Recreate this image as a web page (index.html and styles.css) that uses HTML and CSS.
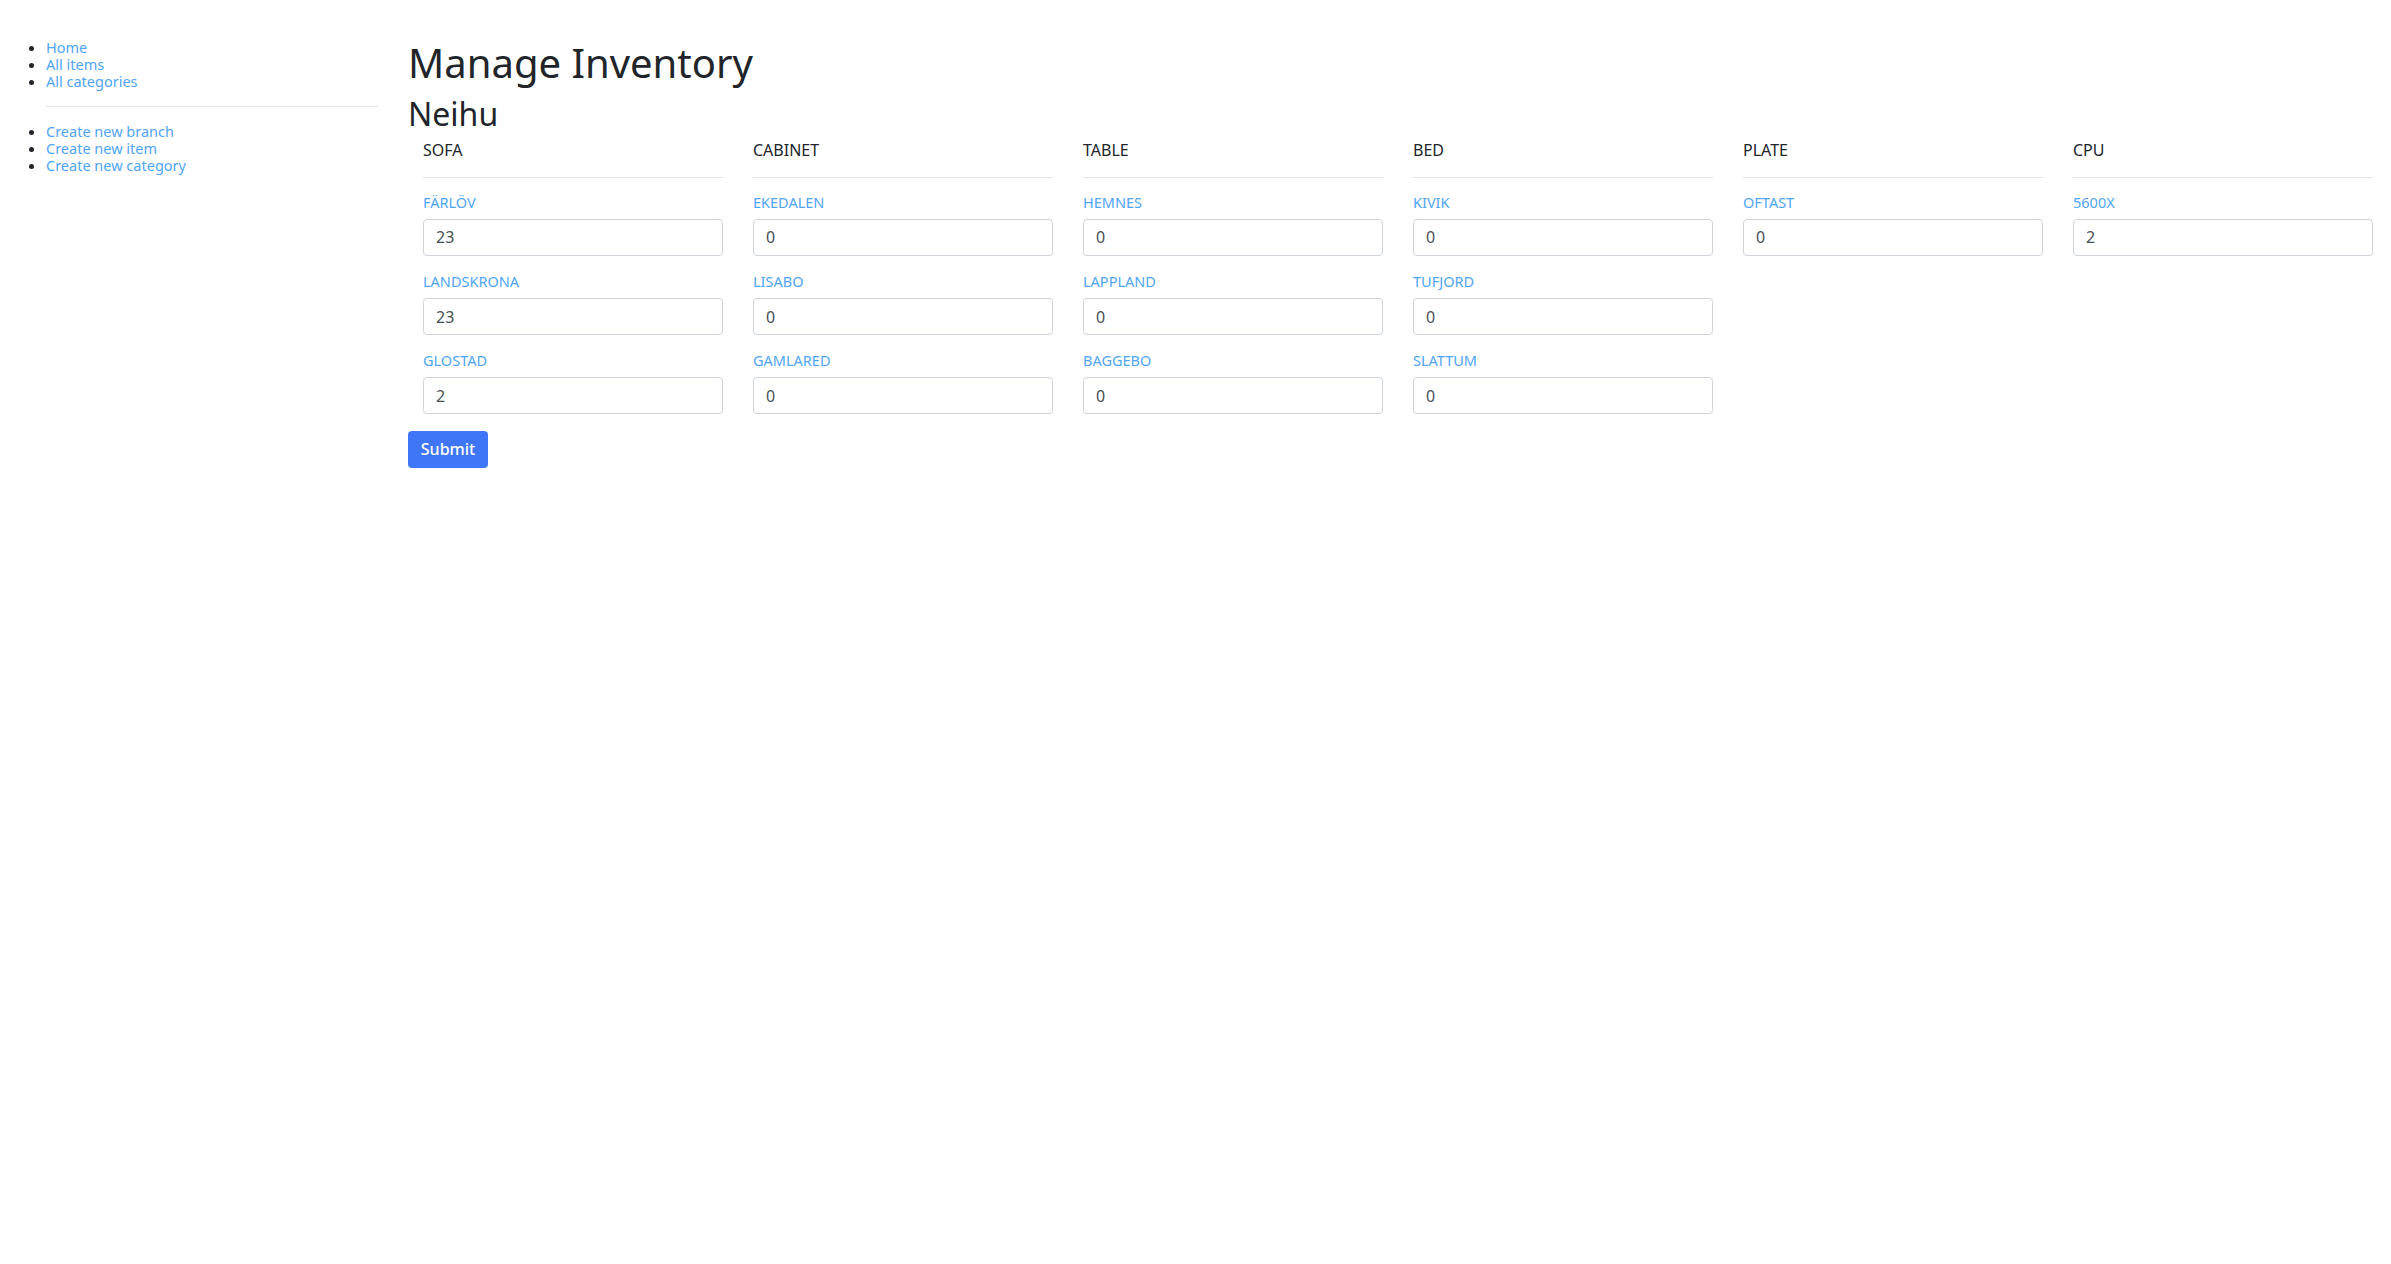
FILE: index.html
```html
<!DOCTYPE html>
<html lang="en">
<head>
<meta charset="utf-8">
<title>Manage Inventory</title>
<link rel="stylesheet" href="styles.css">
</head>
<body>
<div class="layout">
  <nav class="sidebar">
    <ul class="nav-list nav-list-first">
      <li><a href="#">Home</a></li>
      <li><a href="#">All items</a></li>
      <li><a href="#">All categories</a></li>
    </ul>
    <hr class="nav-rule">
    <ul class="nav-list">
      <li><a href="#">Create new branch</a></li>
      <li><a href="#">Create new item</a></li>
      <li><a href="#">Create new category</a></li>
    </ul>
  </nav>
  <main class="main">
    <h1 class="title">Manage Inventory</h1>
    <h2 class="subtitle">Neihu</h2>
    <form class="inventory-form">
      <div class="grid">
        <div class="col">
          <div class="col-head">SOFA</div>
          <hr class="col-rule">
          <div class="group"><label class="lbl"><a href="#">FÄRLÖV</a></label><input class="field" type="text" value="23"></div>
          <div class="group"><label class="lbl"><a href="#">LANDSKRONA</a></label><input class="field" type="text" value="23"></div>
          <div class="group"><label class="lbl"><a href="#">GLOSTAD</a></label><input class="field" type="text" value="2"></div>
        </div>
        <div class="col">
          <div class="col-head">CABINET</div>
          <hr class="col-rule">
          <div class="group"><label class="lbl"><a href="#">EKEDALEN</a></label><input class="field" type="text" value="0"></div>
          <div class="group"><label class="lbl"><a href="#">LISABO</a></label><input class="field" type="text" value="0"></div>
          <div class="group"><label class="lbl"><a href="#">GAMLARED</a></label><input class="field" type="text" value="0"></div>
        </div>
        <div class="col">
          <div class="col-head">TABLE</div>
          <hr class="col-rule">
          <div class="group"><label class="lbl"><a href="#">HEMNES</a></label><input class="field" type="text" value="0"></div>
          <div class="group"><label class="lbl"><a href="#">LAPPLAND</a></label><input class="field" type="text" value="0"></div>
          <div class="group"><label class="lbl"><a href="#">BAGGEBO</a></label><input class="field" type="text" value="0"></div>
        </div>
        <div class="col">
          <div class="col-head">BED</div>
          <hr class="col-rule">
          <div class="group"><label class="lbl"><a href="#">KIVIK</a></label><input class="field" type="text" value="0"></div>
          <div class="group"><label class="lbl"><a href="#">TUFJORD</a></label><input class="field" type="text" value="0"></div>
          <div class="group"><label class="lbl"><a href="#">SLATTUM</a></label><input class="field" type="text" value="0"></div>
        </div>
        <div class="col">
          <div class="col-head">PLATE</div>
          <hr class="col-rule">
          <div class="group"><label class="lbl"><a href="#">OFTAST</a></label><input class="field" type="text" value="0"></div>
        </div>
        <div class="col">
          <div class="col-head">CPU</div>
          <hr class="col-rule">
          <div class="group"><label class="lbl"><a href="#">5600X</a></label><input class="field" type="text" value="2"></div>
        </div>
      </div>
      <button class="btn-submit" type="submit">Submit</button>
    </form>
  </main>
</div>
</body>
</html>
```
FILE: styles.css
```css
html, body {
  margin: 0;
  padding: 0;
  background: #ffffff;
}

body {
  font-family: "Noto Sans", "DejaVu Sans", sans-serif;
  color: #212529;
  font-size: 16px;
}

a {
  color: #50a5f6;
  text-decoration: none;
}

.layout {
  display: flex;
  align-items: flex-start;
}

.sidebar {
  width: 372px;
  padding: 0 30px 0 6px;
  flex: none;
}

.nav-list {
  margin: 0;
  padding-left: 40px;
  font-size: 14.5px;
  line-height: 17.2px;
  list-style: disc;
}

.nav-list-first {
  margin-top: 38.5px;
}

.nav-rule {
  margin: 15.5px 0 16px 40px;
  border: 0;
  border-top: 1px solid #e3e3e3;
  height: 0;
}

.main {
  flex: 1;
  min-width: 0;
}

.title {
  margin: 38.5px 0 8px 0;
  font-size: 40px;
  line-height: 48px;
  font-weight: 400;
  color: #212529;
}

.subtitle {
  margin: 0 0 5px 0;
  font-size: 32px;
  line-height: 38.4px;
  font-weight: 400;
  color: #212529;
}

.inventory-form {
  margin: 0;
}

.grid {
  display: grid;
  grid-template-columns: repeat(6, 300px);
  column-gap: 30px;
  padding: 0 15px;
  align-items: start;
}

.col-head {
  font-size: 16px;
  line-height: 24px;
  color: #212529;
}

.col-rule {
  margin: 15px 0 15.7px 0;
  border: 0;
  border-top: 1px solid #e3e3e3;
  height: 0;
}

.group {
  margin-bottom: 17px;
}

.lbl {
  display: block;
  font-size: 14.5px;
  line-height: 17.2px;
  margin-bottom: 8px;
}

.field {
  display: block;
  box-sizing: border-box;
  width: 100%;
  height: 37px;
  margin: 0;
  padding: 0 12px;
  border: 1px solid #ced4da;
  border-radius: 4px;
  font-family: "Noto Sans", "DejaVu Sans", sans-serif;
  font-size: 16px;
  color: #495057;
  background: #ffffff;
}

.btn-submit {
  display: block;
  box-sizing: border-box;
  width: 80px;
  height: 37px;
  margin: 0;
  padding: 0;
  border: 0;
  border-radius: 4px;
  background: #3f76f7;
  color: #ffffff;
  font-family: "Noto Sans", "DejaVu Sans", sans-serif;
  font-size: 16px;
  font-weight: 500;
  line-height: 37px;
}
```
